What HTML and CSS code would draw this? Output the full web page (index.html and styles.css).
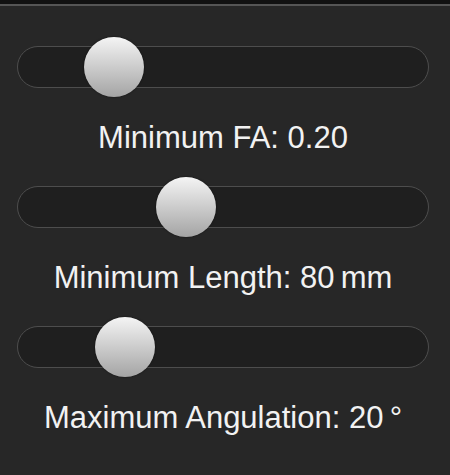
FILE: index.html
```html
<!DOCTYPE html>
<html lang="en">
<head>
<meta charset="UTF-8" />
<title>Tract filter</title>
<link rel="stylesheet" href="styles.css">
</head>
<body>

<div class="topbar"></div>

<div class="panel">
  <div class="group">
    <div class="track"><div class="knob" style="left:66px;"></div></div>
    <div class="label">Minimum FA:&nbsp;0.20</div>
  </div>
  <div class="group">
    <div class="track"><div class="knob" style="left:138px;"></div></div>
    <div class="label">Minimum Length:&nbsp;80&#8201;mm</div>
  </div>
  <div class="group">
    <div class="track"><div class="knob" style="left:77px;"></div></div>
    <div class="label">Maximum Angulation:&nbsp;20&#8201;°</div>
  </div>
</div>

</body>
</html>
```

FILE: styles.css
```css
body {
  margin: 0;
  background: #272727;
  font-family: "Liberation Sans", Arial, sans-serif;
}
.topbar {
  height: 4px;
  background: #111;
  border-bottom: 2px solid #555;
}
.panel {
  padding: 40px 21px 0 17px;
}
.group {
  margin-bottom: 31px;
}
.track {
  position: relative;
  height: 42px;
  box-sizing: border-box;
  border: 1px solid #4d4d4d;
  border-radius: 21px;
  background: #1f1f1f;
}
.knob {
  position: absolute;
  top: 50%;
  width: 60px;
  height: 60px;
  margin-top: -30px;
  border-radius: 50%;
  background: linear-gradient(#f4f4f4, #a4a4a4);
  box-shadow: 0 0 2px rgba(0,0,0,0.6);
}
.label {
  margin-top: 33px;
  text-align: center;
  color: #f2f2f2;
  font-size: 31px;
  line-height: 34px;
}
```
